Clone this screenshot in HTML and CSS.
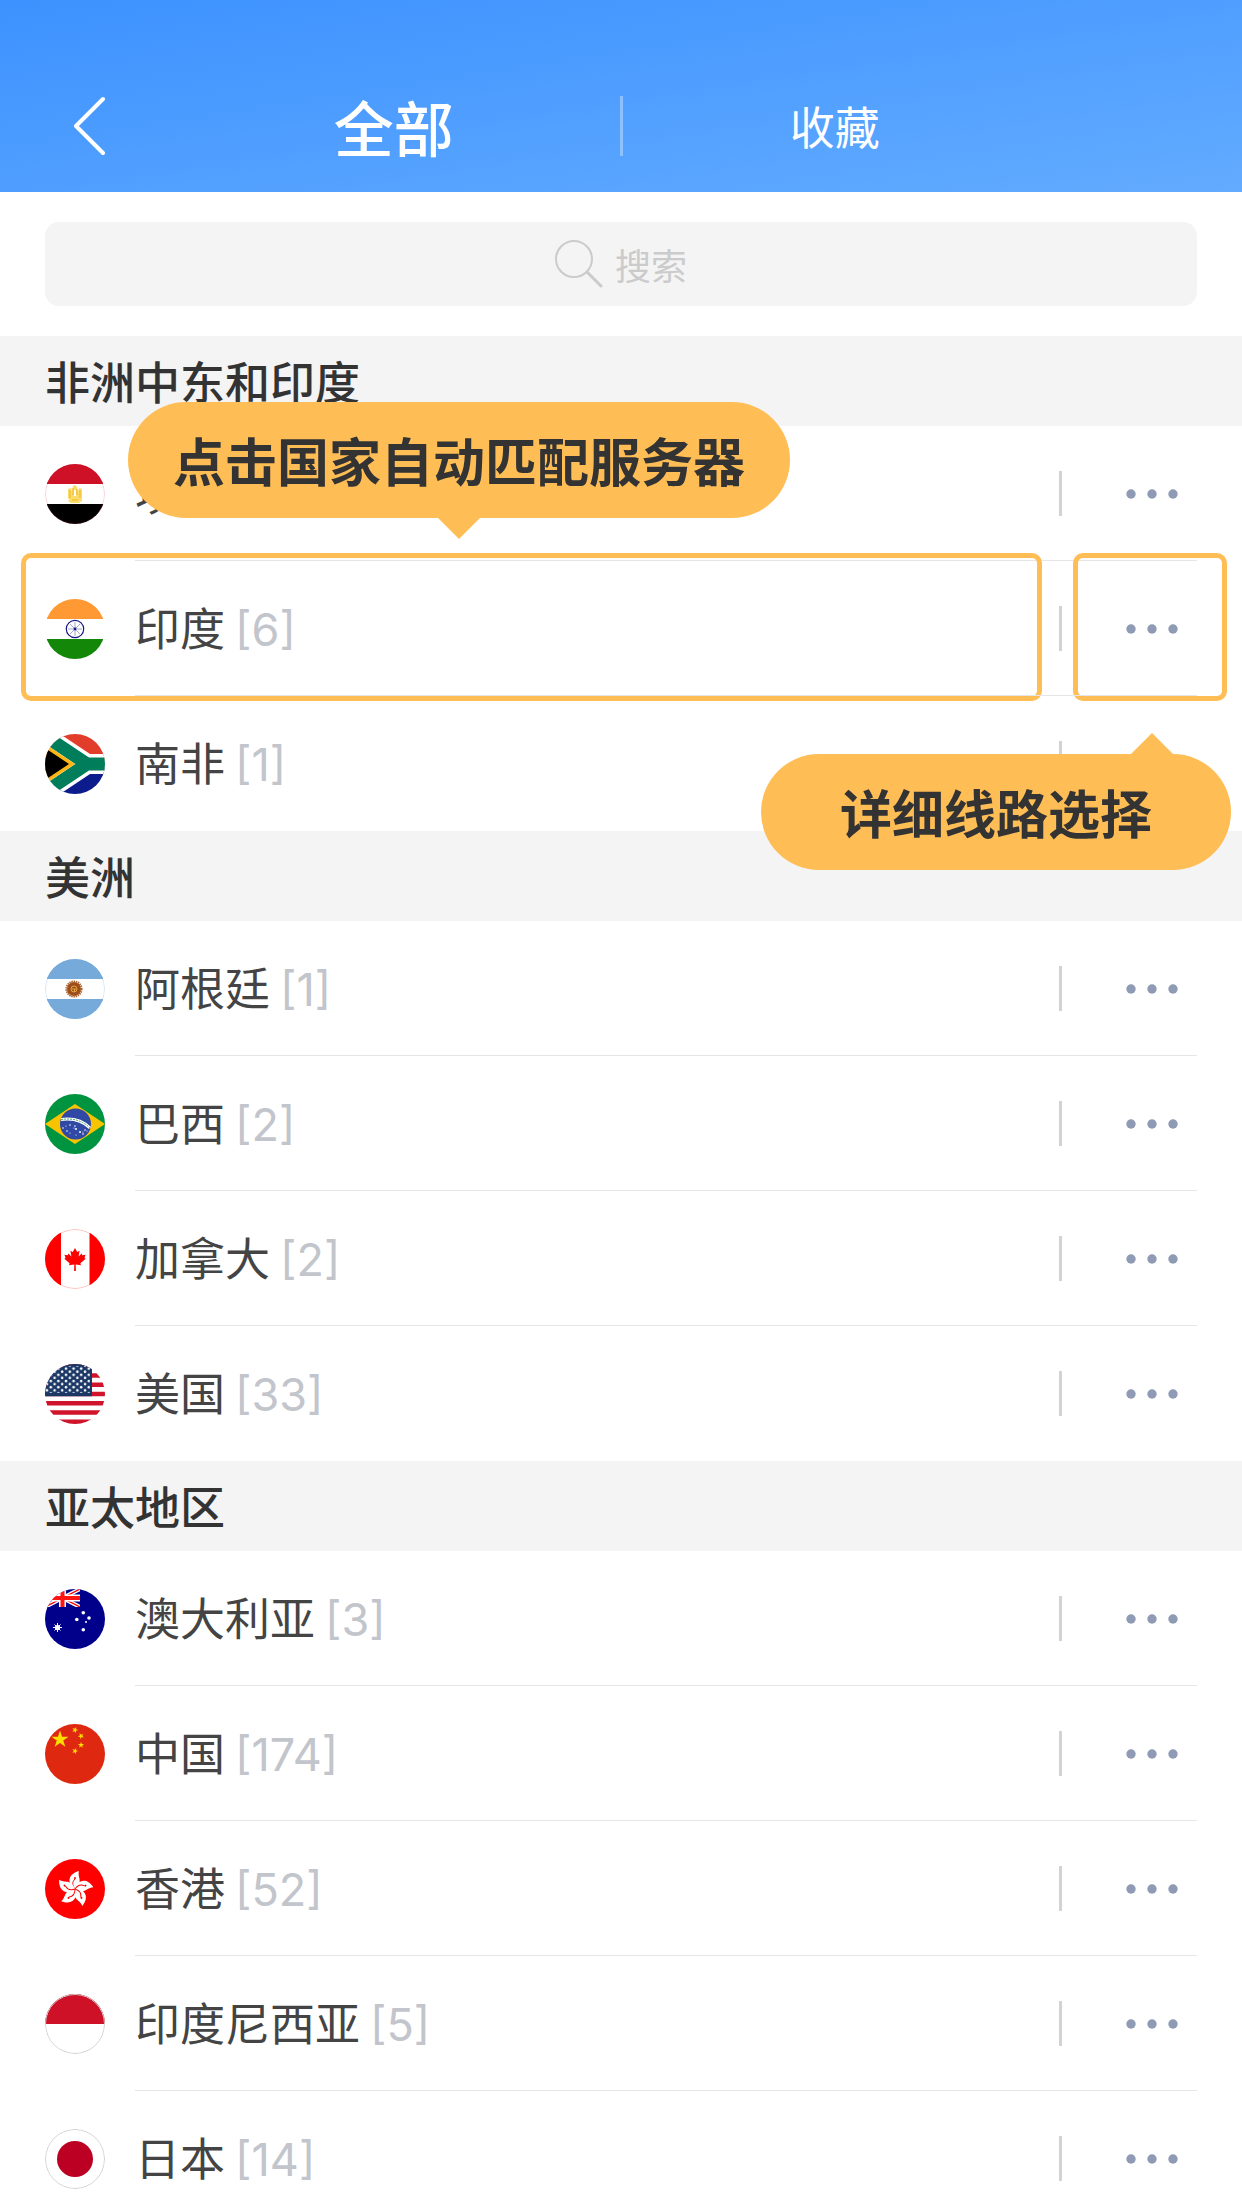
FILE: index.html
```
<!DOCTYPE html>
<html lang="zh-CN">
<head>
    <meta charset="UTF-8">
    <meta name="viewport" content="width=device-width, initial-scale=1.0">
    <title>全部</title>
    <link rel="stylesheet" href="styles.css">
</head>
<body>
    <!-- shared shapes -->
    <svg class="defs" aria-hidden="true">
        <symbol id="dots" viewBox="0 0 54 12">
            <circle cx="6" cy="6" r="4.700"/>
            <circle cx="27" cy="6" r="4.700"/>
            <circle cx="48" cy="6" r="4.700"/>
        </symbol>
        <path id="star" d="M0-10 2.3-3.1 9.5-3.1 3.6 1.2 5.9 8.1 0 3.8-5.9 8.1-3.6 1.2-9.5-3.1-2.3-3.1z"/>
        <g id="petal">
            <path fill="#fff" d="M30 30C24 27 20 16 34 12 32 18 39 23 30 30z"/>
            <path fill="none" stroke="#f00" d="M30 30C27 26 27 23 30 20"/>
            <circle cx="30" cy="19" r="1" fill="#f00"/>
        </g>
    </svg>

    <header class="header">
        <div class="header-left">
            <button class="back" aria-label="返回">
                <svg width="32" height="60" viewBox="0 0 32 60"><path d="M30 3 3 30 30 57"/></svg>
            </button>
            <button class="tab active">全部</button>
        </div>
        <div class="divider"></div>
        <div class="header-right">
            <button class="tab">收藏</button>
        </div>
    </header>

    <div class="search">
        <label class="search-box">
            <svg width="48" height="48" viewBox="0 0 48 48"><circle cx="19" cy="19" r="18"/><path d="M32 32 46 46"/></svg>
            <input type="text" placeholder="搜索" aria-label="搜索">
        </label>
    </div>

    <main class="list">
        <h2>非洲中东和印度</h2>
        <ul>
            <li>
                <button class="country">
                    <svg class="flag" viewBox="0 0 60 60">
                        <path fill="#fff" d="M0 0h60v60H0z"/>
                        <path fill="#ce1126" d="M0 0h60v20H0z"/>
                        <path d="M0 40h60v20H0z"/>
                        <path fill="#fbdc6b" d="M23 25l3-1 1 4 1-6 2-1 2 2 1 5 1-4 3 1v12l-3 2h-8l-3-2 2-2h-2z"/>
                        <path fill="#fff" d="M29 26h2v6h-2z"/>
                        <path fill="none" stroke="#efb51c" d="M25 26v8M35 26v8M27 36h6M28 24v7M32 25v6"/>
                        <circle cx="30" cy="30" r="29.500" fill="none" stroke="#ce1126" stroke-opacity=".2"/>
                    </svg>
                    <span class="name">埃及 <span class="count">[1]</span></span>
                </button>
                <button class="more" aria-label="埃及线路"><svg><use href="#dots"/></svg></button>
            </li>
            <li class="guide">
                <button class="country">
                    <svg class="flag" viewBox="0 0 60 60">
                        <path fill="#fff" d="M0 0h60v60H0z"/>
                        <path fill="#f93" d="M0 0h60v20H0z"/>
                        <path fill="#138808" d="M0 40h60v20H0z"/>
                        <g fill="none" stroke="#1a1a86">
                            <circle cx="30" cy="30" r="8.700" stroke-width="1.200"/>
                            <path stroke-width=".4" d="M30 23v14M23 30h14M25 25l10 10M35 25 25 35"/>
                        </g>
                        <circle cx="30" cy="30" r="1.400" fill="#1a1a86"/>
                    </svg>
                    <span class="name">印度 <span class="count">[6]</span></span>
                </button>
                <button class="more" aria-label="印度线路"><svg><use href="#dots"/></svg></button>
                <div class="outline outline-country"></div>
                <div class="outline outline-more"></div>
                <div class="tip tip-country">点击国家自动匹配服务器</div>
                <div class="tip tip-more">详细线路选择</div>
            </li>
            <li>
                <button class="country">
                    <svg class="flag" viewBox="0 0 60 60">
                        <path fill="#e23d2b" d="M0 0h60v30H0z"/>
                        <path fill="#0c1c8c" d="M0 30h60v30H0z"/>
                        <g fill="none">
                            <path stroke="#fff" stroke-width="20" d="M-6-2 42 30-6 62M42 30h20"/>
                            <path stroke="#007e5b" stroke-width="13" d="M-6-2 42 30-6 62M40 30h22"/>
                        </g>
                        <path fill="#ffb612" d="M0 10 30 30 0 50z"/>
                        <path d="M0 14 24 30 0 46z"/>
                    </svg>
                    <span class="name">南非 <span class="count">[1]</span></span>
                </button>
                <button class="more" aria-label="南非线路"><svg><use href="#dots"/></svg></button>
            </li>
        </ul>

        <h2>美洲</h2>
        <ul>
            <li>
                <button class="country">
                    <svg class="flag" viewBox="0 0 60 60">
                        <path fill="#fff" d="M0 0h60v60H0z"/>
                        <path fill="#75aadb" d="M0 0h60v20H0zM0 40h60v20H0z"/>
                        <circle cx="29" cy="30" r="7" fill="#9c4f1c"/>
                        <circle cx="29" cy="30" r="7.600" fill="none" stroke="#a9652f" stroke-width="2" stroke-dasharray="1.4 .8"/>
                        <circle cx="29" cy="30" r="3" fill="none" stroke="#e3a53c"/>
                        <path stroke="#e3a53c" d="M27 30h4M29.500 30v3"/>
                        <circle cx="30" cy="30" r="29.500" fill="none" stroke="#75aadb" stroke-opacity=".3"/>
                    </svg>
                    <span class="name">阿根廷 <span class="count">[1]</span></span>
                </button>
                <button class="more" aria-label="阿根廷线路"><svg><use href="#dots"/></svg></button>
            </li>
            <li>
                <button class="country">
                    <svg class="flag" viewBox="0 0 60 60">
                        <path fill="#009440" d="M0 0h60v60H0z"/>
                        <path fill="#f8c300" d="M0 30 30 10 60 30 30 50z"/>
                        <circle cx="30.500" cy="30" r="15.500" fill="#2f49a5"/>
                        <path fill="none" stroke="#fff" stroke-width="3" d="M16 25.500Q34 23 45 34"/>
                        <path fill="none" stroke="#4aa66c" stroke-dasharray="2 1" d="M16 25.500Q34 23 45 34"/>
                        <g fill="#fff">
                            <circle cx="18" cy="34" r=".8"/><circle cx="21" cy="32" r=".6"/>
                            <circle cx="22" cy="37" r=".8"/><circle cx="25" cy="31" r=".8"/>
                            <circle cx="25" cy="39" r=".6"/><circle cx="30" cy="32" r=".8"/>
                            <circle cx="31" cy="35" r="1"/><circle cx="29" cy="34" r=".6"/>
                            <circle cx="31" cy="41" r=".6"/><circle cx="35" cy="38" r="1"/>
                            <circle cx="38" cy="40" r=".8"/><circle cx="40" cy="36" r=".8"/>
                            <circle cx="38" cy="38" r=".6"/><circle cx="42" cy="37" r=".6"/>
                        </g>
                    </svg>
                    <span class="name">巴西 <span class="count">[2]</span></span>
                </button>
                <button class="more" aria-label="巴西线路"><svg><use href="#dots"/></svg></button>
            </li>
            <li>
                <button class="country">
                    <svg class="flag" viewBox="0 0 60 60">
                        <path fill="#fff" d="M0 0h60v60H0z"/>
                        <path fill="red" d="M0 0h16v60H0zM44.500 0H60v60H44.500z"/>
                        <path fill="red" d="M30 19l2.200 4 2.400-1.300-1 5.800 3-3 .7 1.700 3.200-.4-1 3.300 1.200.7-5.300 4.500.6 2-5.300-.8.200 6.500h-1.800l.2-6.500-5.300.8.600-2-5.300-4.500 1.200-.7-1-3.300 3.200.4.700-1.700 3 3-1-5.800 2.400 1.300z"/>
                        <circle cx="30" cy="30" r="29.500" fill="none" stroke="red" stroke-opacity=".25"/>
                    </svg>
                    <span class="name">加拿大 <span class="count">[2]</span></span>
                </button>
                <button class="more" aria-label="加拿大线路"><svg><use href="#dots"/></svg></button>
            </li>
            <li>
                <button class="country">
                    <svg class="flag" viewBox="0 0 60 60">
                        <defs>
                            <pattern id="us-stars" width="7.600" height="6.200" patternUnits="userSpaceOnUse">
                                <circle cx="2" cy="1.600" r="1.300" fill="#fff"/>
                                <circle cx="5.800" cy="4.700" r="1.300" fill="#fff"/>
                            </pattern>
                        </defs>
                        <path fill="#fff" d="M0 0h60v60H0z"/>
                        <path stroke="#d0142c" stroke-width="4.600" d="M0 2.300h60M0 11.500h60M0 20.800h60M0 30h60M0 39.200h60M0 48.500h60M0 57.700h60"/>
                        <path fill="#1b3765" d="M0 0h47v32.300H0z"/>
                        <path fill="url(#us-stars)" d="M1 2h44v27H1z"/>
                    </svg>
                    <span class="name">美国 <span class="count">[33]</span></span>
                </button>
                <button class="more" aria-label="美国线路"><svg><use href="#dots"/></svg></button>
            </li>
        </ul>

        <h2>亚太地区</h2>
        <ul>
            <li>
                <button class="country">
                    <svg class="flag" viewBox="0 0 60 60">
                        <path fill="#00008b" d="M0 0h60v60H0z"/>
                        <svg width="35" height="18" viewBox="0 0 35 18">
                            <path stroke="#fff" stroke-width="4" d="M0 0 35 18M35 0 0 18"/>
                            <path stroke="red" stroke-width="1.300" d="M0 0 35 18M35 0 0 18"/>
                            <path stroke="#fff" stroke-width="7" d="M17.500 0v18M0 9h35"/>
                            <path stroke="#ff1414" stroke-width="4" d="M17.500 0v18M0 9h35"/>
                        </svg>
                        <g fill="#fff">
                            <circle cx="12.500" cy="38.500" r="2.600"/>
                            <path stroke="#fff" d="M12.500 34v9M8 38.500h9M9.500 35.500l6 6M15.500 35.500l-6 6"/>
                            <circle cx="38.300" cy="23.700" r="1.800"/>
                            <circle cx="44" cy="29" r="1.800"/>
                            <circle cx="31.800" cy="30.500" r="1.800"/>
                            <circle cx="41" cy="33" r="1"/>
                            <circle cx="38.300" cy="40.700" r="1.800"/>
                        </g>
                    </svg>
                    <span class="name">澳大利亚 <span class="count">[3]</span></span>
                </button>
                <button class="more" aria-label="澳大利亚线路"><svg><use href="#dots"/></svg></button>
            </li>
            <li>
                <button class="country">
                    <svg class="flag" viewBox="0 0 60 60">
                        <path fill="#de2910" d="M0 0h60v60H0z"/>
                        <g fill="#ffde00">
                            <use href="#star" transform="translate(15 15.500) scale(.9)"/>
                            <use href="#star" transform="translate(30 6) rotate(20) scale(.33)"/>
                            <use href="#star" transform="translate(36 12) rotate(45) scale(.33)"/>
                            <use href="#star" transform="translate(36 21) scale(.33)"/>
                            <use href="#star" transform="translate(30 27) rotate(20) scale(.33)"/>
                        </g>
                    </svg>
                    <span class="name">中国 <span class="count">[174]</span></span>
                </button>
                <button class="more" aria-label="中国线路"><svg><use href="#dots"/></svg></button>
            </li>
            <li>
                <button class="country">
                    <svg class="flag" viewBox="0 0 60 60">
                        <path fill="red" d="M0 0h60v60H0z"/>
                        <use href="#petal"/>
                        <use href="#petal" transform="rotate(72 30 30)"/>
                        <use href="#petal" transform="rotate(144 30 30)"/>
                        <use href="#petal" transform="rotate(216 30 30)"/>
                        <use href="#petal" transform="rotate(288 30 30)"/>
                    </svg>
                    <span class="name">香港 <span class="count">[52]</span></span>
                </button>
                <button class="more" aria-label="香港线路"><svg><use href="#dots"/></svg></button>
            </li>
            <li>
                <button class="country">
                    <svg class="flag" viewBox="0 0 60 60">
                        <path fill="#fff" d="M0 0h60v60H0z"/>
                        <path fill="#ce1126" d="M0 0h60v30H0z"/>
                        <circle cx="30" cy="30" r="29.500" fill="none" stroke="#d0d0d0"/>
                    </svg>
                    <span class="name">印度尼西亚 <span class="count">[5]</span></span>
                </button>
                <button class="more" aria-label="印度尼西亚线路"><svg><use href="#dots"/></svg></button>
            </li>
            <li>
                <button class="country">
                    <svg class="flag" viewBox="0 0 60 60">
                        <path fill="#fff" d="M0 0h60v60H0z"/>
                        <circle cx="30" cy="30" r="18" fill="#bc0024"/>
                        <circle cx="30" cy="30" r="29.500" fill="none" stroke="#d0d0d0"/>
                    </svg>
                    <span class="name">日本 <span class="count">[14]</span></span>
                </button>
                <button class="more" aria-label="日本线路"><svg><use href="#dots"/></svg></button>
            </li>
        </ul>
    </main>
</body>
</html>
```

FILE: styles.css
```
* {
    box-sizing: border-box;
}
body {
    margin: 0;
    height: 100vh;
    display: flex;
    flex-direction: column;
    overflow: hidden;
    background: #fff;
    color: #444;
    font-family: "Noto Sans CJK SC", sans-serif;
    font-size: 45px;
}
button {
    border: none;
    padding: 0;
    background: none;
    font: inherit;
    color: inherit;
    cursor: pointer;
}
.defs {
    position: absolute;
    width: 0;
    height: 0;
}

/* header */
.header {
    flex: none;
    display: grid;
    grid-template-columns: 1fr 3px 1fr;
    align-items: center;
    height: 192px;
    padding-top: 60px;
    background: linear-gradient(to bottom right, #3d92ff, #62abff);
    color: #fff;
}
.header-left,
.header-right {
    display: flex;
    align-items: center;
}
.header-right {
    padding-right: 195px;
}
.back {
    display: flex;
    width: 168px;
    padding-left: 73px;
}
.back svg {
    fill: none;
    stroke: #fff;
    stroke-width: 4;
    stroke-linecap: round;
    stroke-linejoin: round;
}
.tab {
    flex: 1;
    line-height: 72px;
}
.tab.active {
    font-size: 60px;
    font-weight: 500;
}
.divider {
    height: 60px;
    background: rgba(255, 255, 255, 0.35);
}

/* search */
.search {
    flex: none;
    padding: 30px 45px;
}
.search-box {
    display: flex;
    align-items: center;
    justify-content: center;
    gap: 12px;
    height: 84px;
    border-radius: 14px;
    background: #f4f4f4;
}
.search-box svg {
    fill: none;
    stroke: #cbcbcb;
    stroke-width: 2;
    stroke-linecap: round;
}
.search-box path {
    stroke-width: 3;
}
.search-box input {
    width: 72px;
    border: none;
    padding: 0;
    outline: none;
    background: none;
    font: inherit;
    font-size: 36px;
}
.search-box input::placeholder {
    color: #cbcbcb;
}

/* country list */
.list {
    flex: 1;
    overflow-y: auto;
    scrollbar-width: none;
}
.list h2 {
    margin: 0;
    padding: 0 45px;
    background: #f4f4f4;
    color: #333;
    font-size: 45px;
    font-weight: 500;
    line-height: 90px;
}
.list ul {
    margin: 0;
    padding: 0;
    list-style: none;
}
.list li {
    position: relative;
    display: flex;
    align-items: center;
    height: 135px;
}
.list li:not(:last-child)::after {
    content: "";
    position: absolute;
    left: 135px;
    right: 45px;
    bottom: 0;
    height: 1px;
    background: #e6e6e8;
}
.country {
    flex: 1;
    display: flex;
    align-items: center;
    gap: 30px;
    height: 100%;
    padding-left: 45px;
    text-align: left;
}
.flag {
    width: 60px;
    height: 60px;
    border-radius: 50%;
}
.name {
    line-height: 66px;
}
.count {
    color: #c2c5cb;
    font-family: Inter, sans-serif;
}
.more {
    display: flex;
    align-items: center;
    justify-content: center;
    width: 183px;
    height: 45px;
    border-left: 3px solid #d3d3d3;
}
.more svg {
    width: 54px;
    height: 12px;
    fill: #8f9bb5;
}

/* first-run guide */
.guide {
    z-index: 1;
}
.outline {
    position: absolute;
    top: -8px;
    bottom: -5px;
    border: 5px solid #ffbd55;
    border-radius: 10px;
    pointer-events: none;
}
.outline-country {
    left: 21px;
    right: 200px;
}
.outline-more {
    right: 15px;
    width: 154px;
}
.tip {
    position: absolute;
    border-radius: 58px;
    background: #ffbd55;
    color: #333;
    font-size: 52px;
    font-weight: 700;
    line-height: 116px;
    white-space: nowrap;
}
.tip::after {
    content: "";
    position: absolute;
    border: 21px solid transparent;
}
.tip-country {
    left: 128px;
    bottom: 178px;
    padding: 0 45px;
}
.tip-country::after {
    top: 100%;
    left: 50%;
    margin-left: -21px;
    border-top-color: #ffbd55;
    border-bottom: none;
}
.tip-more {
    right: 11px;
    top: 193px;
    padding: 0 79px;
}
.tip-more::after {
    bottom: 100%;
    right: 58px;
    border-bottom-color: #ffbd55;
    border-top: none;
}
```
